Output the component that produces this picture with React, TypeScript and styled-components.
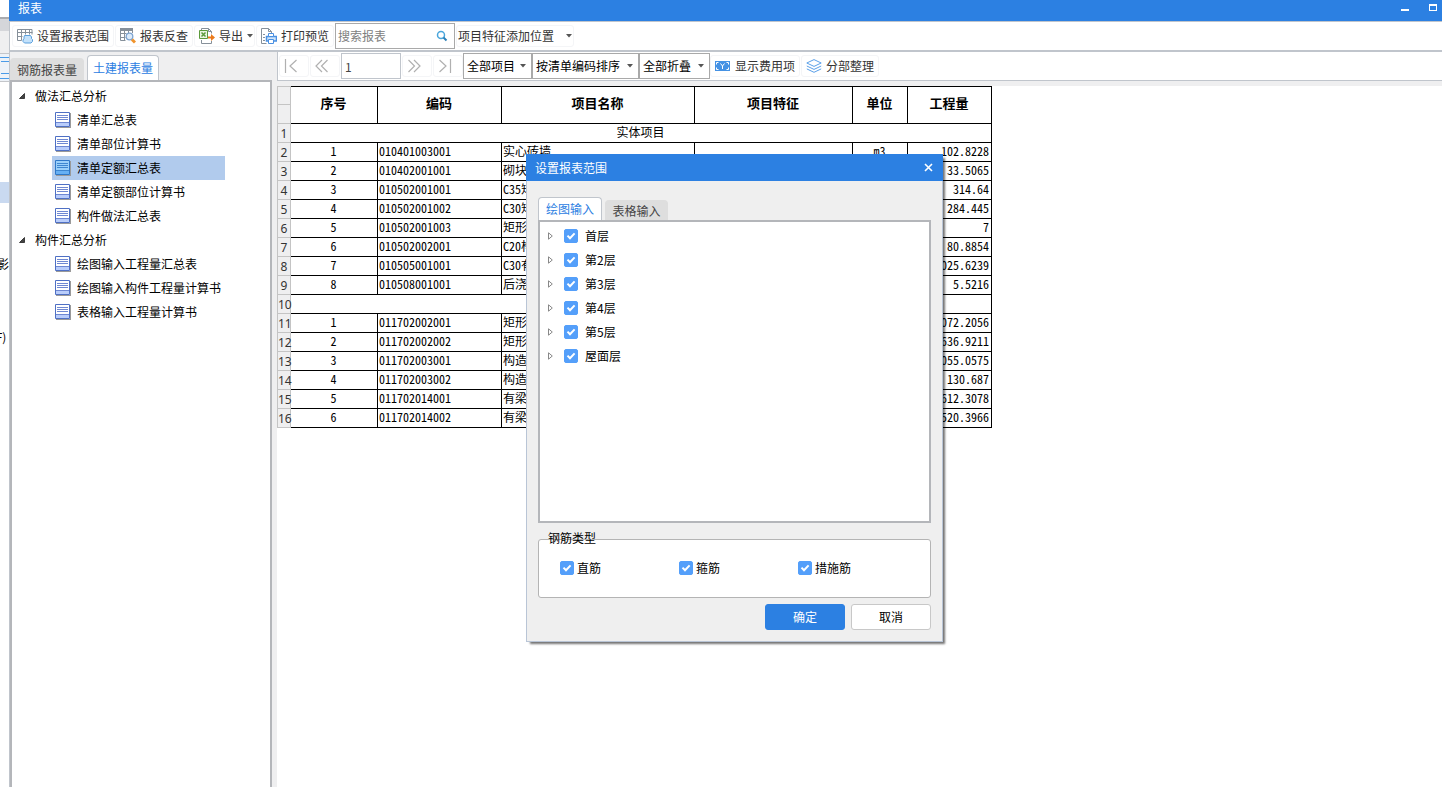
import React from "react";
import styled, { createGlobalStyle, css } from "styled-components";

const GlobalStyle = createGlobalStyle`
  * { box-sizing: border-box; }
  body {
    margin: 0;
    background: #fff;
    color: #000;
    font-family: "Noto Sans CJK SC", sans-serif;
    font-size: 12px;
    line-height: 16px;
  }
  button, input, select { font: inherit; color: inherit; margin: 0; padding: 0; }
  ul { list-style: none; margin: 0; padding: 0; }
`;

const Desktop = styled.div`
  position: relative;
  display: flex;
  min-height: 100vh;
`;

/* ---------- sliver of the main application behind the window ---------- */

const BackApp = styled.div`
  flex: 0 0 9px;
  width: 9px;
  overflow: hidden;
  display: flex;
  flex-direction: column;
`;

const BackBand = styled.div<{ $h: number; $bg?: string; $line?: string }>`
  flex: none;
  height: ${(p) => p.$h}px;
  background: ${(p) => p.$bg ?? "#fff"};
  ${(p) => p.$line && css`border-top: ${p.$line};`}
  display: flex;
  align-items: center;
  justify-content: flex-end;
  white-space: nowrap;
`;

const BackLines = styled.div`
  width: 9px;
  height: 22px;
  border-top: 1px solid #4a9be8;
  border-bottom: 1px solid #4a9be8;
  display: flex;
  align-items: center;
  justify-content: flex-end;
  &::before {
    content: "";
    width: 8px;
    height: 11px;
    border-top: 1px solid #4a9be8;
    border-bottom: 1px solid #4a9be8;
  }
`;

/* ---------- report window ---------- */

const Window = styled.section`
  flex: 1;
  min-width: 0;
  display: flex;
  flex-direction: column;
`;

const TitleBar = styled.header`
  display: flex;
  justify-content: space-between;
  height: 22px;
  padding: 0 5px 6px 9px;
  background: #2c80e2;
  border-bottom: 1px solid #c0c5cc;
  color: #fff;
`;

const WindowTitle = styled.h1`
  margin: 0;
  font-size: 12px;
  font-weight: 400;
  line-height: 16px;
`;

const WindowButtons = styled.div`
  display: flex;
  gap: 16px;
`;

const GlyphButton = styled.button`
  display: flex;
  align-items: center;
  justify-content: center;
  border: 0;
  background: none;
  cursor: pointer;
  color: inherit;
`;

const Frame = styled.div`
  flex: 1;
  display: flex;
  flex-direction: column;
  border-left: 1px solid #c0c5cc;
`;

const Toolbar = styled.div`
  display: flex;
  align-items: center;
  height: 30px;
  padding: 0 2px;
  gap: 1px;
  background: #fff;
  border-bottom: 2px solid #c0c5cc;
`;

const ToolButton = styled.button<{ $menu?: boolean; $textOnly?: boolean }>`
  display: flex;
  align-items: center;
  height: 22px;
  padding-left: ${(p) => (p.$textOnly ? 1 : 4)}px;
  padding-right: ${(p) => (p.$menu ? 1 : 4)}px;
  gap: ${(p) => (p.$textOnly ? 12 : 4)}px;
  border: 1px solid #f4f5f7;
  border-radius: 3px;
  background: #fff;
  color: #333;
  white-space: nowrap;
  cursor: pointer;
`;

const SearchBox = styled.label`
  display: flex;
  align-items: center;
  width: 120px;
  height: 26px;
  padding: 0 6px 0 2px;
  border: 1px solid #a9a9a9;
  background: #fff;
`;

const SearchInput = styled.input`
  flex: 1;
  min-width: 0;
  border: 0;
  outline: 0;
  background: none;
  &::placeholder { color: #808080; opacity: 1; }
`;

const Body = styled.div`
  flex: 1;
  display: flex;
  background: #efeff0;
`;

const Side = styled.aside`
  flex: 0 0 262px;
  display: flex;
  flex-direction: column;
`;

const SideTabs = styled.div`
  display: flex;
  align-items: flex-end;
  gap: 3px;
  height: 28px;
`;

const Tab = styled.button<{ $active?: boolean; $w: number; $h: number }>`
  width: ${(p) => p.$w}px;
  height: ${(p) => p.$h}px;
  border: 1px solid ${(p) => (p.$active ? "#c0c5cc" : "#dedede")};
  border-bottom: 0;
  border-radius: 4px 4px 0 0;
  background: ${(p) => (p.$active ? "#fff" : "#dedede")};
  color: ${(p) => (p.$active ? "#2c80e2" : "#444")};
  white-space: nowrap;
  cursor: pointer;
`;

const TreePanel = styled.nav`
  flex: 1;
  padding-top: 2px;
  border: 2px solid #b4b6ba;
  border-bottom: 0;
  background: #fff;
`;

const GroupRow = styled.div`
  display: flex;
  align-items: center;
  height: 24px;
  padding-left: 7px;
  gap: 10px;
`;

const ReportLink = styled.a<{ $selected?: boolean }>`
  display: flex;
  align-items: center;
  width: 173px;
  height: 24px;
  margin-left: 40px;
  padding-left: 3px;
  gap: 5px;
  background: ${(p) => (p.$selected ? "#b1cbed" : "transparent")};
  color: #000;
  text-decoration: none;
  white-space: nowrap;
`;

const Main = styled.main`
  flex: 1;
  min-width: 0;
  margin-left: 5px;
  display: flex;
  flex-direction: column;
`;

const NavBar = styled.div`
  display: flex;
  align-items: center;
  height: 29px;
  padding-left: 1px;
  background: #fff;
  border-left: 1px solid #c0c5cc;
  border-bottom: 1px solid #c0c5cc;
`;

const PageButton = styled.button`
  display: flex;
  align-items: center;
  justify-content: center;
  width: 30px;
  height: 22px;
  padding-right: 6px;
  border: 1px solid #f4f5f7;
  border-radius: 3px;
  background: #fff;
  cursor: pointer;
`;

const PageInput = styled.input`
  width: 60px;
  height: 26px;
  padding: 0 3px;
  border: 1px solid #c0c5cc;
  color: #444;
`;

const SelectWrap = styled.span<{ $w: number }>`
  display: grid;
  align-items: center;
  width: ${(p) => p.$w}px;
  height: 26px;
  border: 1px solid #a9a9a9;
  > * { grid-area: 1 / 1; }
  > svg { justify-self: end; margin-right: 5px; pointer-events: none; }
`;

const Select = styled.select`
  appearance: none;
  width: 100%;
  height: 24px;
  padding-left: 3px;
  border: 0;
  background: #fff;
`;

const Pages = styled.div`
  display: flex;
  align-items: center;
  gap: 1px;
`;

const NavTools = styled.div`
  display: flex;
  gap: 1px;
`;

const Sheet = styled.div`
  flex: 1;
  margin-top: 5px;
  background: #fff;
`;

/* ---------- data table ---------- */

const Table = styled.table`
  table-layout: fixed;
  width: 715px;
  border-spacing: 0;
  font-feature-settings: "hwid";
`;

const RowHead = styled.th`
  height: 19px;
  padding: 1px 0 0;
  border: 1px solid #c4c4c4;
  border-top: 0;
  background: #efeff0;
  color: #333;
  font-family: "Noto Sans", sans-serif;
  font-feature-settings: normal;
  font-weight: 400;
  line-height: 17px;
  white-space: nowrap;
  thead tr:first-child & { border-top: 1px solid #c4c4c4; }
`;

const HeadCell = styled.th`
  height: 38px;
  padding: 0 1px 4px 0;
  border: 1px solid #000;
  border-left: 0;
  font-size: 13px;
  font-weight: 700;
`;

const Cell = styled.td<{ $align?: "left" | "center" | "right" }>`
  height: 19px;
  padding: 0 2px 2px 1px;
  border-right: 1px solid #000;
  border-bottom: 1px solid #000;
  line-height: 16px;
  text-align: ${(p) => p.$align ?? "left"};
  white-space: nowrap;
  overflow: hidden;
`;

/* ---------- dialog ---------- */

const Dialog = styled.section`
  position: absolute;
  top: 154px;
  left: 526px;
  width: 417px;
  background: #efefef;
  box-shadow: 3px 3px 2px -1px rgba(0, 0, 0, 0.55);
`;

const DialogTitle = styled.header`
  display: flex;
  align-items: center;
  justify-content: space-between;
  height: 27px;
  padding: 0 10px 0 9px;
  background: #2c80e2;
  color: #fff;
`;

const DialogHeading = styled.h2`
  margin: 0;
  font-size: 12px;
  font-weight: 400;
`;

const DialogBody = styled.div`
  padding: 16px 11px 11px;
  border: 1px solid #b9c5d6;
  border-top: 0;
`;

const DialogTabs = styled.div`
  display: flex;
  align-items: flex-end;
  gap: 3px;
  height: 23px;
`;

const FloorPanel = styled.div`
  height: 303px;
  padding: 2px 7px;
  border: 2px solid #b4b6ba;
  background: #fff;
`;

const FloorRow = styled.li`
  display: flex;
  align-items: center;
  height: 24px;
  gap: 10px;
`;

const CheckLabel = styled.label<{ $gap: number }>`
  display: flex;
  align-items: center;
  gap: ${(p) => p.$gap}px;
`;

const Check = styled.input.attrs({ type: "checkbox" })`
  appearance: none;
  width: 14px;
  height: 14px;
  border: 1px solid #a9a9a9;
  border-radius: 2px;
  background: #fff;
  &:checked {
    border-color: #549ffa;
    background: #549ffa
      url("data:image/svg+xml,%3Csvg xmlns='http://www.w3.org/2000/svg' viewBox='0 0 12 12'%3E%3Cpath d='M2.5 5.6 5 8.2 9.6 3.4' fill='none' stroke='white' stroke-width='2'/%3E%3C/svg%3E")
      center / 12px 12px no-repeat;
  }
`;

const RebarGroup = styled.div`
  height: 59px;
  margin-top: 16px;
  padding: 0 9px;
  border: 1px solid #b4b4b4;
  border-radius: 3px;
  background: #fff;
`;

const RebarTitle = styled.div`
  height: 16px;
  margin-top: -10px;
`;

const RebarChecks = styled.div`
  display: grid;
  grid-template-columns: 119px 119px 1fr;
  margin-top: 14px;
  padding-left: 12px;
`;

const Actions = styled.div`
  display: flex;
  justify-content: flex-end;
  gap: 6px;
  margin-top: 6px;
`;

const ActionButton = styled.button<{ $primary?: boolean }>`
  width: 80px;
  height: 26px;
  border: 1px solid ${(p) => (p.$primary ? "#2c80e2" : "#c8c8c8")};
  border-radius: 3px;
  background: ${(p) => (p.$primary ? "#2c80e2" : "#fff")};
  color: ${(p) => (p.$primary ? "#fff" : "#000")};
  cursor: pointer;
`;

/* ---------- icons ---------- */

const RangeIcon = () => (
  <svg width="16" height="16" viewBox="0 0 16 16" fill="none">
    <path d="M.5 12.500V1.500h14.500v5M.5 4.500h15M.5 8.500h5M.5 12.500h4M4.500 1.500v11M8.500 1.500v5M12.500 1.500v5" stroke="#86909a" />
    <path d="M7.500 7.500h6l1 1.500v1.500l1 1v2l-1.500 1.500H7.500L6 13.500v-1.500l1-1.500V9z" fill="#c4e2fb" stroke="#5a9fdc" />
  </svg>
);

const LookupIcon = () => (
  <svg width="16" height="16" viewBox="0 0 16 16" fill="none">
    <path d="M0 1.500h13" stroke="#86909a" strokeWidth="3" />
    <path d="M.5 2v10.500h5M.5 5.500h6M.5 9.500h5M4.500 2v10.500M8.500 2v3M12.500 2v3" stroke="#86909a" />
    <circle cx="9.500" cy="8.500" r="3.300" fill="#dcebfa" stroke="#7ea4d0" strokeWidth="1.300" />
    <path d="m12 11.500 3 3" stroke="#f0932b" strokeWidth="3" />
  </svg>
);

const ExportIcon = () => (
  <svg width="16" height="16" viewBox="0 0 16 16" fill="none">
    <path d="M2.500 2.500v-2h7l3 3v2M9.500.5v3h3M2.500 12v3.500h10V13" stroke="#86909a" />
    <path d="M.5 2.500h8v8h-8z" fill="#e9f5e2" stroke="#5b9a3c" />
    <path d="m2.500 4.500 4 4M6.500 4.500l-4 4" stroke="#5b9a3c" strokeWidth="1.500" />
    <path d="M9 9.500h4" stroke="#ea7a1c" strokeWidth="2" />
    <path d="m12 6 4 3.500-4 3.500z" fill="#ea7a1c" />
  </svg>
);

const PrintIcon = () => (
  <svg width="16" height="16" viewBox="0 0 16 16" fill="none">
    <path d="M10.500 5V3.500l-3-3h-7v15h5M7.500.5v3h3" stroke="#86909a" />
    <path d="M2 6.500h2M2 9.500h2M2 12.500h2" stroke="#86909a" />
    <path d="M5.500 8.500h10v4.500h-10z" fill="#cfe4fa" stroke="#4a90e2" strokeWidth="1.500" />
    <path d="M7.500 5.500h5v3h-5zM7.500 11.500h5v4h-5z" fill="#fff" stroke="#4a90e2" />
  </svg>
);

const SearchIcon = () => (
  <svg width="12" height="12" viewBox="0 0 12 12" fill="none">
    <circle cx="5" cy="5" r="3.500" stroke="#4aa6dc" strokeWidth="1.500" />
    <path d="m7.500 7.500 3 3" stroke="#2c80b8" strokeWidth="2" />
  </svg>
);

const Arrow = () => (
  <svg width="6" height="4" viewBox="0 0 6 4">
    <path d="M0 0h6L3 3.500z" fill="#555" />
  </svg>
);

const PageGlyph = ({ d }: { d: string }) => (
  <svg width="14" height="14" viewBox="0 0 14 14" fill="none">
    <path d={d} stroke="#b0b0b0" strokeWidth="1.200" />
  </svg>
);

const FeeIcon = () => (
  <svg width="16" height="10" viewBox="0 0 16 10" fill="none">
    <path d="M0 0h15v10H0z" fill="#4592e4" />
    <path d="M1.500 3.500v-2h2M13.500 3.500v-2h-2M1.500 6.500v2h2M13.500 6.500v2h-2" stroke="#fff" />
    <path d="M5.500 2.500l2 2.500 2-2.500M7.500 5v3" stroke="#fff" />
  </svg>
);

const LayersIcon = () => (
  <svg width="16" height="14" viewBox="0 0 16 14" fill="none" stroke="#5a9fe8">
    <path d="M8 .6 15.200 4 8 7.400.8 4z" />
    <path d="M.8 7 8 10.400 15.200 7M.8 9.900 8 13.300l7.200-3.400" />
  </svg>
);

const SheetIcon = ({ active }: { active?: boolean }) => (
  <svg width="17" height="17" viewBox="0 0 17 17" fill="none">
    <path d="M15.500 1v15M1 15.500h15" stroke="#9a9a9a" />
    <path d="M.5.500h14v14H.5z" fill={active ? "#9ad0fa" : "#fff"} stroke={active ? "#2f78c8" : "#4f70c4"} />
    <path d="M1 10h13v4H1z" fill={active ? "#66b0f4" : "#b9cdfb"} />
    <path d="M2 3.500h11M2 5.500h11M2 7.500h11" stroke={active ? "#3d86d0" : "#6f88d2"} />
    <path d="M1 10.500h13" stroke={active ? "#3d86d0" : "#6f88d2"} />
  </svg>
);

const OpenCaret = () => (
  <svg width="6" height="6" viewBox="0 0 6 6">
    <path d="M5.500.5v5H.5z" fill="#444" stroke="#222" strokeWidth=".8" />
  </svg>
);

const ClosedCaret = () => (
  <svg width="7" height="8" viewBox="0 0 7 8" fill="none">
    <path d="M1.500.8v6.400L5.300 4z" stroke="#888" />
  </svg>
);

/* ---------- data ---------- */

const reportGroups = [
  { title: "做法汇总分析", items: ["清单汇总表", "清单部位计算书", "清单定额汇总表", "清单定额部位计算书", "构件做法汇总表"] },
  { title: "构件汇总分析", items: ["绘图输入工程量汇总表", "绘图输入构件工程量计算书", "表格输入工程量计算书"] },
];

const columns = ["序号", "编码", "项目名称", "项目特征", "单位", "工程量"];

type Row = { section: string } | { cells: [string, string, string, string, string] };

const rows: Row[] = [
  { section: "实体项目" },
  { cells: ["1", "010401003001", "实心砖墙", "m3", "102.8228"] },
  { cells: ["2", "010402001001", "砌块", "", "33.5065"] },
  { cells: ["3", "010502001001", "C35矩", "", "314.64"] },
  { cells: ["4", "010502001002", "C30矩", "", "284.445"] },
  { cells: ["5", "010502001003", "矩形", "", "7"] },
  { cells: ["6", "010502002001", "C20构", "", "80.8854"] },
  { cells: ["7", "010505001001", "C30有", "", "025.6239"] },
  { cells: ["8", "010508001001", "后浇", "", "5.5216"] },
  { section: "" },
  { cells: ["1", "011702002001", "矩形", "", "072.2056"] },
  { cells: ["2", "011702002002", "矩形", "", "636.9211"] },
  { cells: ["3", "011702003001", "构造", "", "055.0575"] },
  { cells: ["4", "011702003002", "构造", "", "130.687"] },
  { cells: ["5", "011702014001", "有梁", "", "612.3078"] },
  { cells: ["6", "011702014002", "有梁", "", "520.3966"] },
];

const floors = ["首层", "第2层", "第3层", "第4层", "第5层", "屋面层"];
const rebarTypes = ["直筋", "箍筋", "措施筋"];

const filters = [
  { label: "全部项目", width: 69 },
  { label: "按清单编码排序", width: 107 },
  { label: "全部折叠", width: 71 },
];

/* ---------- page ---------- */

const ReportTable = () => (
  <Table>
    <colgroup>
      <col style={{ width: 14 }} />
      <col style={{ width: 87 }} />
      <col style={{ width: 124 }} />
      <col style={{ width: 193 }} />
      <col style={{ width: 158 }} />
      <col style={{ width: 55 }} />
      <col style={{ width: 84 }} />
    </colgroup>
    <thead>
      <tr>
        <RowHead />
        {columns.map((c) => (
          <HeadCell key={c} rowSpan={2}>{c}</HeadCell>
        ))}
      </tr>
      <tr>
        <RowHead />
      </tr>
    </thead>
    <tbody>
      {rows.map((row, i) => (
        <tr key={i}>
          <RowHead scope="row">{i + 1}</RowHead>
          {"section" in row ? (
            <Cell colSpan={6} $align="center">{row.section}</Cell>
          ) : (
            <>
              <Cell $align="center">{row.cells[0]}</Cell>
              <Cell>{row.cells[1]}</Cell>
              <Cell>{row.cells[2]}</Cell>
              <Cell />
              <Cell $align="center">{row.cells[3]}</Cell>
              <Cell $align="right">{row.cells[4]}</Cell>
            </>
          )}
        </tr>
      ))}
    </tbody>
  </Table>
);

const RangeDialog = () => (
  <Dialog role="dialog" aria-labelledby="range-title">
    <DialogTitle>
      <DialogHeading id="range-title">设置报表范围</DialogHeading>
      <GlyphButton aria-label="关闭">
        <svg width="9" height="9" viewBox="0 0 9 9">
          <path d="m1 1 7 7M8 1 1 8" stroke="#fff" strokeWidth="1.600" />
        </svg>
      </GlyphButton>
    </DialogTitle>
    <DialogBody>
      <DialogTabs>
        <Tab $active $w={64} $h={23}>绘图输入</Tab>
        <Tab $w={63} $h={20}>表格输入</Tab>
      </DialogTabs>
      <FloorPanel>
        <ul>
          {floors.map((f) => (
            <FloorRow key={f}>
              <ClosedCaret />
              <CheckLabel $gap={7}>
                <Check defaultChecked />
                {f}
              </CheckLabel>
            </FloorRow>
          ))}
        </ul>
      </FloorPanel>
      <RebarGroup role="group" aria-labelledby="rebar-title">
        <RebarTitle id="rebar-title">钢筋类型</RebarTitle>
        <RebarChecks>
          {rebarTypes.map((t) => (
            <CheckLabel key={t} $gap={3}>
              <Check defaultChecked />
              {t}
            </CheckLabel>
          ))}
        </RebarChecks>
      </RebarGroup>
      <Actions>
        <ActionButton $primary>确定</ActionButton>
        <ActionButton>取消</ActionButton>
      </Actions>
    </DialogBody>
  </Dialog>
);

export default function App() {
  return (
    <Desktop>
      <GlobalStyle />
      <BackApp>
        <BackBand $h={17} />
        <BackBand $h={14} $bg="#d5d6da" $line="2px solid #a9abaf" />
        <BackBand $h={22} $bg="#efeff0" />
        <BackBand $h={28} $bg="#edf2f8" $line="1px solid #c4c6ca">
          <BackLines />
        </BackBand>
        <BackBand $h={101} $line="1px solid #c4c6ca" />
        <BackBand $h={21} $bg="#c9d9f0" />
        <BackBand $h={53} />
        <BackBand $h={16}>影</BackBand>
        <BackBand $h={57} />
        <BackBand $h={16}>F)&nbsp;</BackBand>
      </BackApp>
      <Window>
        <TitleBar>
          <WindowTitle>报表</WindowTitle>
          <WindowButtons>
            <GlyphButton aria-label="最小化">
              <svg width="12" height="12" viewBox="0 0 12 12">
                <path d="M0 7h8v2H0z" fill="#fff" />
              </svg>
            </GlyphButton>
            <GlyphButton aria-label="最大化">
              <svg width="8" height="7" viewBox="0 0 8 7">
                <path d="M0 0h8v7H0zM1 2v4h6V2z" fill="#fff" fillRule="evenodd" />
              </svg>
            </GlyphButton>
          </WindowButtons>
        </TitleBar>
        <Frame>
          <Toolbar>
            <ToolButton><RangeIcon />设置报表范围</ToolButton>
            <ToolButton><LookupIcon />报表反查</ToolButton>
            <ToolButton $menu><ExportIcon />导出<Arrow /></ToolButton>
            <ToolButton><PrintIcon />打印预览</ToolButton>
            <SearchBox>
              <SearchInput placeholder="搜索报表" aria-label="搜索报表" />
              <SearchIcon />
            </SearchBox>
            <ToolButton $menu $textOnly>项目特征添加位置<Arrow /></ToolButton>
          </Toolbar>
          <Body>
            <Side>
              <SideTabs>
                <Tab $w={74} $h={22}>钢筋报表量</Tab>
                <Tab $active $w={72} $h={25}>土建报表量</Tab>
              </SideTabs>
              <TreePanel>
                {reportGroups.map((g) => (
                  <div key={g.title}>
                    <GroupRow><OpenCaret />{g.title}</GroupRow>
                    {g.items.map((item) => {
                      const selected = item === "清单定额汇总表";
                      return (
                        <ReportLink key={item} href="#" $selected={selected}>
                          <SheetIcon active={selected} />
                          {item}
                        </ReportLink>
                      );
                    })}
                  </div>
                ))}
              </TreePanel>
            </Side>
            <Main>
              <NavBar>
                <Pages>
                  <PageButton aria-label="首页"><PageGlyph d="M1.500 0v14M12.500 1 6 7l6.500 6" /></PageButton>
                  <PageButton aria-label="上一页"><PageGlyph d="M7 1 1 7l6 6M12.500 1l-6 6 6 6" /></PageButton>
                  <PageInput defaultValue="1" aria-label="页码" />
                  <PageButton aria-label="下一页"><PageGlyph d="m1.500 1 6 6-6 6M7 1l6 6-6 6" /></PageButton>
                  <PageButton aria-label="末页"><PageGlyph d="M12.500 0v14M1.500 1 8 7l-6.500 6" /></PageButton>
                </Pages>
                {filters.map((f) => (
                  <SelectWrap key={f.label} $w={f.width}>
                    <Select aria-label={f.label}>
                      <option>{f.label}</option>
                    </Select>
                    <Arrow />
                  </SelectWrap>
                ))}
                <NavTools>
                  <ToolButton><FeeIcon />显示费用项</ToolButton>
                  <ToolButton><LayersIcon />分部整理</ToolButton>
                </NavTools>
              </NavBar>
              <Sheet>
                <ReportTable />
              </Sheet>
            </Main>
          </Body>
        </Frame>
      </Window>
      <RangeDialog />
    </Desktop>
  );
}
